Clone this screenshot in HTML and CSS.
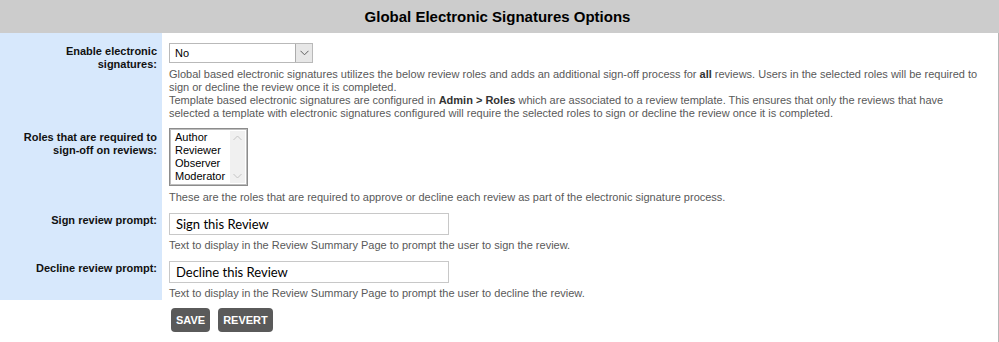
FILE: index.html
```html
<!DOCTYPE html>
<html>
<head>
<meta charset="utf-8">
<title>Global Electronic Signatures Options</title>
<link rel="stylesheet" href="styles.css">
</head>
<body>
<div class="panel">
  <div class="panel-header">Global Electronic Signatures Options</div>
  <div class="panel-body">
    <div class="row row-enable">
      <div class="label">Enable electronic<br>signatures:</div>
      <div class="field">
        <div class="select-wrap">
          <select class="select"><option>No</option><option>Yes</option></select>
          <span class="select-btn"><svg width="9" height="6" viewBox="0 0 9 6"><path d="M0.5 0.8 L4.5 4.8 L8.5 0.8" fill="none" stroke="#606060" stroke-width="1"/></svg></span>
        </div>
        <p class="desc">Global based electronic signatures utilizes the below review roles and adds an additional sign-off process for <b>all</b> reviews. Users in the selected roles will be required to sign or decline the review once it is completed.<br>Template based electronic signatures are configured in <b>Admin &gt; Roles</b> which are associated to a review template. This ensures that only the reviews that have selected a template with electronic signatures configured will require the selected roles to sign or decline the review once it is completed.</p>
      </div>
    </div>
    <div class="row row-roles">
      <div class="label">Roles that are required to<br>sign-off on reviews:</div>
      <div class="field">
        <div class="listbox">
          <ul class="list-items">
            <li>Author</li>
            <li>Reviewer</li>
            <li>Observer</li>
            <li>Moderator</li>
          </ul>
          <div class="scrollbar">
            <svg width="9" height="6" viewBox="0 0 9 6"><path d="M0.5 5 L4.5 1 L8.5 5" fill="none" stroke="#c4c4c4" stroke-width="1"/></svg>
            <svg width="9" height="6" viewBox="0 0 9 6"><path d="M0.5 1 L4.5 5 L8.5 1" fill="none" stroke="#c4c4c4" stroke-width="1"/></svg>
          </div>
        </div>
        <p class="desc">These are the roles that are required to approve or decline each review as part of the electronic signature process.</p>
      </div>
    </div>
    <div class="row row-sign">
      <div class="label">Sign review prompt:</div>
      <div class="field">
        <input class="text-input" type="text" value="Sign this Review">
        <p class="desc desc-input">Text to display in the Review Summary Page to prompt the user to sign the review.</p>
      </div>
    </div>
    <div class="row row-decline">
      <div class="label">Decline review prompt:</div>
      <div class="field">
        <input class="text-input" type="text" value="Decline this Review">
        <p class="desc desc-input">Text to display in the Review Summary Page to prompt the user to decline the review.</p>
      </div>
    </div>
    <div class="row row-buttons">
      <div class="label label-empty"></div>
      <div class="field buttons">
        <button class="btn" type="button">SAVE</button>
        <button class="btn" type="button">REVERT</button>
      </div>
    </div>
  </div>
</div>
</body>
</html>
```
FILE: styles.css
```css
html, body {
  margin: 0;
  padding: 0;
  background: #ffffff;
}
body {
  font-family: "Liberation Sans", Arial, sans-serif;
  width: 999px;
  height: 342px;
  overflow: hidden;
}
.panel {
  width: 999px;
}
.panel-header {
  height: 33px;
  background: #cccccc;
  color: #000;
  font-weight: bold;
  font-size: 15px;
  line-height: 33px;
  text-align: center;
  padding-right: 4px;
  box-sizing: border-box;
}
.panel-body {
  border-right: 1px solid #b6b6b6;
  height: 309px;
  box-sizing: border-box;
}
.row {
  display: flex;
}
.label {
  flex: none;
  width: 162px;
  box-sizing: border-box;
  background: #d7e8fc;
  text-align: right;
  font-weight: bold;
  font-size: 11px;
  line-height: 12.5px;
  color: #111;
  padding-right: 5px;
}
.label-empty {
  background: transparent;
}
.field {
  flex: 1;
  padding-left: 7px;
  padding-right: 12px;
}
.row-enable .field { padding-top: 10px; }
.row-enable .label { padding-top: 12px; }
.row-roles .field { padding-top: 8px; }
.row-roles .label { padding-top: 11px; }
.row-sign .field { padding-top: 9px; }
.row-sign .label { padding-top: 10px; }
.row-decline .field { padding-top: 9px; }
.row-decline .label { padding-top: 10px; }
.row-buttons .field { padding-top: 8px; }

.desc {
  margin: 5px 0 0 0;
  font-size: 11px;
  line-height: 13px;
  color: #595959;
}
.desc b {
  color: #333;
}
.desc-input {
  margin-top: 4px;
}

.select-wrap {
  position: relative;
  width: 144px;
  height: 20px;
}
.select {
  -webkit-appearance: none;
  appearance: none;
  width: 144px;
  height: 20px;
  box-sizing: border-box;
  border: 1px solid #b9b9b9;
  background: #ffffff;
  font-family: "Liberation Sans", Arial, sans-serif;
  font-size: 11px;
  color: #000;
  padding: 0 0 0 5px;
  margin: 0;
  border-radius: 0;
  outline: none;
}
.select-btn {
  position: absolute;
  top: 1px;
  right: 1px;
  width: 17px;
  height: 18px;
  box-sizing: border-box;
  background: #e7e7e7;
  border-left: 1px solid #acacac;
  display: flex;
  align-items: center;
  justify-content: center;
}

.listbox {
  width: 79px;
  height: 58px;
  box-sizing: border-box;
  border: 1px solid #8c8c8c;
  box-shadow: inset 0 0 0 1px #bdbdbd;
  display: flex;
  background: #fff;
}
.list-items {
  list-style: none;
  margin: 0;
  padding: 2px 0 0 5px;
  flex: 1;
  font-size: 11px;
  line-height: 13px;
  color: #000;
}
.scrollbar {
  flex: none;
  width: 15px;
  margin: 2px 2px 2px 0;
  background: #f0f0f0;
  display: flex;
  flex-direction: column;
  justify-content: space-between;
  align-items: center;
  padding: 4px 0 4px;
  box-sizing: border-box;
}
.scrollbar svg {
  display: block;
}

.text-input {
  display: block;
  width: 280px;
  height: 22px;
  box-sizing: border-box;
  border: 1px solid #c8c8c8;
  padding: 0 0 0 6px;
  margin: 0;
  font-family: Lato, "Liberation Sans", sans-serif;
  font-size: 13px;
  color: #000;
  outline: none;
  border-radius: 0;
}

.buttons {
  display: flex;
  gap: 8px;
  padding-left: 9px;
}
.btn {
  height: 24px;
  border: none;
  border-radius: 4px;
  background: #5a5a5a;
  color: #ffffff;
  font-family: "Liberation Sans", Arial, sans-serif;
  font-weight: bold;
  font-size: 11px;
  padding: 0 5px;
  margin: 0;
}
```
